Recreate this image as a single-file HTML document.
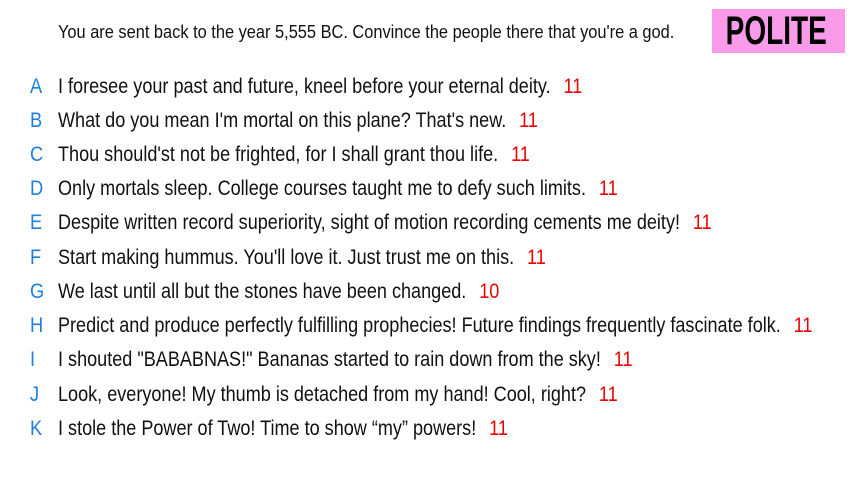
<!DOCTYPE html>
<html><head><style>
body{margin:0;width:853px;height:480px;background:#fff;position:relative;overflow:hidden;font-family:"Liberation Sans",sans-serif;color:#111}
.h{position:absolute;left:58px;top:22px;font-size:18px;white-space:nowrap;transform:scaleX(0.91);transform-origin:left}
.p{position:absolute;left:712px;top:9px;width:133px;height:44px;background:#f99be8;color:#000;font-size:40px;line-height:44px;text-align:center;font-weight:bold;overflow:hidden}
.p span{display:inline-block;transform:scaleX(0.7);margin-left:-8px}
.r{position:absolute;left:0;height:30px;font-size:21px;line-height:30px;white-space:nowrap}
.r b{position:absolute;left:30px;color:#1e7fe0;font-weight:normal;transform:scaleX(0.87);transform-origin:left}
.r span{position:absolute;left:58px;transform:scaleX(0.86);transform-origin:left}
.r i{font-style:normal;color:#e00;margin-left:15px}
</style></head><body>
<div class="h">You are sent back to the year 5,555 BC. Convince the people there that you're a god.</div>
<div class="p"><span>POLITE</span></div>
<div class="r" style="top:72px"><b>A</b><span>I foresee your past and future, kneel before your eternal deity.<i>11</i></span></div>
<div class="r" style="top:106px"><b>B</b><span>What do you mean I'm mortal on this plane? That's new.<i>11</i></span></div>
<div class="r" style="top:140px"><b>C</b><span>Thou should'st not be frighted, for I shall grant thou life.<i>11</i></span></div>
<div class="r" style="top:174px"><b>D</b><span>Only mortals sleep. College courses taught me to defy such limits.<i>11</i></span></div>
<div class="r" style="top:208px"><b>E</b><span>Despite written record superiority, sight of motion recording cements me deity!<i>11</i></span></div>
<div class="r" style="top:243px"><b>F</b><span>Start making hummus. You'll love it. Just trust me on this.<i>11</i></span></div>
<div class="r" style="top:277px"><b>G</b><span>We last until all but the stones have been changed.<i>10</i></span></div>
<div class="r" style="top:311px"><b>H</b><span>Predict and produce perfectly fulfilling prophecies! Future findings frequently fascinate folk.<i>11</i></span></div>
<div class="r" style="top:345px"><b>I</b><span>I shouted "BABABNAS!" Bananas started to rain down from the sky!<i>11</i></span></div>
<div class="r" style="top:380px"><b>J</b><span>Look, everyone! My thumb is detached from my hand! Cool, right?<i>11</i></span></div>
<div class="r" style="top:414px"><b>K</b><span>I stole the Power of Two! Time to show “my” powers!<i>11</i></span></div>
</body></html>
